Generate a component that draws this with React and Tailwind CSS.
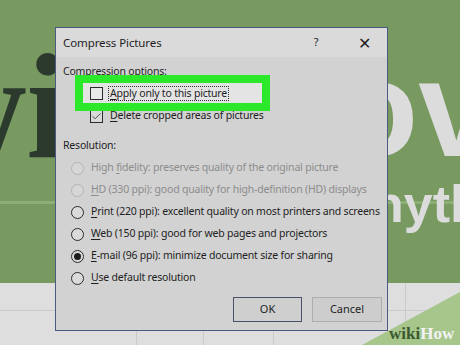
import { Check } from 'lucide-react'

const ui = { fontFamily: '"Noto Sans", "Open Sans", sans-serif' }

function Radio({ state }) {
  if (state === 'disabled') {
    return <span className="w-[13px] h-[13px] rounded-full border border-[#b4b4b4] bg-[#d6d6d6] shrink-0" />
  }
  return (
    <span className="w-[13px] h-[13px] rounded-full border border-[#2b2b2b] bg-[#dadada] shrink-0 flex items-center justify-center">
      {state === 'on' && <span className="w-[7px] h-[7px] rounded-full bg-[#1c1c1c]" />}
    </span>
  )
}

function Key({ k, rest }) {
  return (
    <>
      <span className="underline underline-offset-2">{k}</span>
      {rest}
    </>
  )
}

export default function App() {
  const options = [
    { state: 'disabled', label: <>High <Key k="f" rest="idelity: preserves quality of the original picture" /></> },
    { state: 'disabled', label: <Key k="H" rest="D (330 ppi): good quality for high-definition (HD) displays" /> },
    { state: 'off', label: <Key k="P" rest="rint (220 ppi): excellent quality on most printers and screens" /> },
    { state: 'off', label: <Key k="W" rest="eb (150 ppi): good for web pages and projectors" /> },
    { state: 'on', label: <Key k="E" rest="-mail (96 ppi): minimize document size for sharing" /> },
    { state: 'off', label: <Key k="U" rest="se default resolution" /> },
  ]

  return (
    <div className="relative w-[460px] h-[345px] overflow-hidden bg-[#789a60]">
      {/* background slide */}
      <div className="absolute left-0 right-0 top-[201px] h-[3px] bg-[#8caf76]" />
      <div className="absolute left-0 right-0 top-[283px] bottom-0 bg-[#dedede]">
        <div className="absolute left-0 right-0 top-[27px] h-px bg-[#cbcbcb]" />
        <div className="absolute top-0 bottom-0 left-[136px] w-px bg-[#cbcbcb]" />
        <div className="absolute top-0 bottom-0 left-[203px] w-px bg-[#cbcbcb]" />
        <div className="absolute top-0 bottom-0 left-[273px] w-px bg-[#cbcbcb]" />
        <div className="absolute top-0 bottom-0 left-[405px] w-px bg-[#cbcbcb]" />
      </div>
      <div
        className="absolute left-[-82px] top-[32px] text-[150px] font-bold leading-none text-[#2b3a2d]"
        style={{ fontFamily: '"Liberation Serif", serif' }}
      >
        wi
      </div>
      <div
        className="absolute left-[334px] top-[39px] text-[138px] font-bold leading-none text-[#dcdcdc]"
        style={{ fontFamily: '"Liberation Sans", sans-serif' }}
      >
        ov
      </div>
      <div
        className="absolute left-[372px] top-[178px] text-[52px] font-bold leading-none text-[#dcdcdc]"
        style={{ fontFamily: '"Liberation Sans", sans-serif' }}
      >
        nything
      </div>
      <svg className="absolute left-0 top-0" width="460" height="345">
        <polygon points="362,345 460,345 460,292" fill="#a6c68c" />
      </svg>
      <div
        className="absolute left-[389px] top-[325px] text-[17px] font-bold leading-none"
        style={{ fontFamily: '"Liberation Serif", serif' }}
      >
        <span className="text-[#3c5a30]">wiki</span>
        <span className="text-[#f2f2f2]">How</span>
      </div>

      {/* dialog */}
      <div
        className="absolute left-[55px] top-[27px] w-[333px] h-[304px] border border-[#4a5a80] bg-[#d2d2d2] text-[#1e1e1e] flex flex-col"
        style={ui}
      >
        <div className="h-[29px] bg-[#dadada] flex items-center pl-[7px] text-[11.5px] tracking-[-0.1px] shrink-0">
          <span className="flex-1">Compress Pictures</span>
          <span className="w-[12px] text-[11px] mr-[36px] text-center">?</span>
          <span className="text-[16px] font-light mr-[16px] leading-none">✕</span>
        </div>

        <div className="flex flex-col text-[10.5px] tracking-[-0.2px] pl-[7px] pt-[6px]">
          <div className="h-[16px] leading-[16px]">Compression options:</div>

          <div className="relative mt-[3px] h-[22px] flex items-center pl-[27px]">
            <div className="absolute left-[12px] top-[-7px] w-[195px] h-[36px] border-[8px] border-[#2be82b] bg-[#e4e4e4] z-10" />
            <span className="relative z-20 w-[13px] h-[13px] border border-[#2b2b2b] bg-[#e8e8e8] shrink-0" />
            <span className="relative z-20 ml-[5px] px-px border border-dotted border-[#333] leading-[13px]">
              <Key k="A" rest="pply only to this picture" />
            </span>
          </div>

          <div className="mt-px h-[22px] flex items-center pl-[27px]">
            <span className="w-[13px] h-[13px] border border-[#2b2b2b] bg-[#dadada] shrink-0 flex items-center justify-center">
              <Check size={11} strokeWidth={1.6} className="text-[#1e1e1e]" />
            </span>
            <span className="ml-[7px]">
              <Key k="D" rest="elete cropped areas of pictures" />
            </span>
          </div>

          <div className="mt-[10px] h-[16px] leading-[16px]">Resolution:</div>

          <div className="mt-[4px] flex flex-col pl-[8px]">
            {options.map((o, i) => (
              <div key={i} className="h-[22px] flex items-center">
                <Radio state={o.state} />
                <span className={'ml-[7px] whitespace-nowrap ' + (o.state === 'disabled' ? 'text-[#8c8c8c]' : '')}>
                  {o.label}
                </span>
              </div>
            ))}
          </div>
        </div>

        <div className="mt-auto mb-[8px] flex justify-end gap-[10px] pr-[5px] text-[11px]">
          <button className="w-[69px] h-[25px] border border-[#4a5068] bg-[#cfcfcf]">OK</button>
          <button className="w-[70px] h-[25px] border border-[#adadad] bg-[#cdcdcd]">Cancel</button>
        </div>
      </div>
    </div>
  )
}
